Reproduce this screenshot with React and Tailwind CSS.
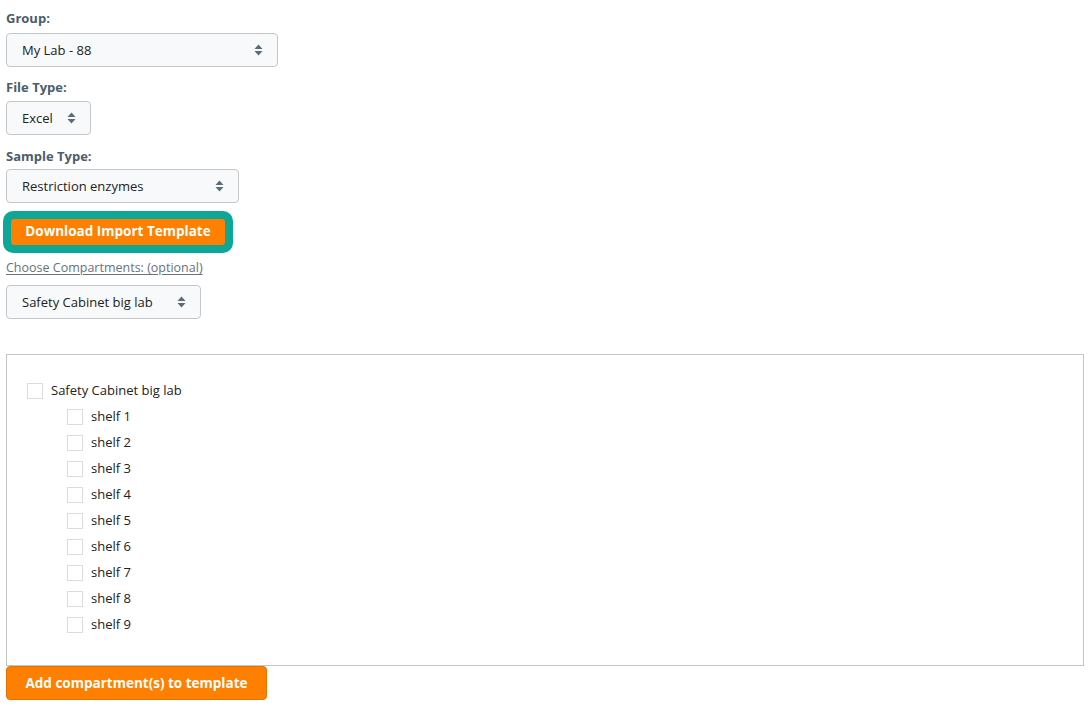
import React from "react";

const Arrows = () => (
  <svg width="9" height="12" viewBox="0 0 9 12" className="shrink-0">
    <path d="M4.5 0.5 L8.5 5 L0.5 5 Z" fill="#5a6b7b" />
    <path d="M4.5 11.5 L8.5 7 L0.5 7 Z" fill="#5a6b7b" />
  </svg>
);

const Select = ({ value, w }) => (
  <div
    className={`${w} h-[34px] flex items-center justify-between pl-[15px] pr-[14px] bg-[#f8f9fa] border border-[#c4c7ca] rounded-[4px] text-[13px] text-[#222]`}
  >
    <span className="pt-[2px]">{value}</span>
    <Arrows />
  </div>
);

const Label = ({ children, cls }) => (
  <div className={`text-[13px] font-bold text-[#4b5c6c] ${cls}`}>{children}</div>
);

const Box = () => (
  <span className="w-[16px] h-[16px] border border-[#dcdcdc] bg-white shrink-0 inline-block" />
);

export default function App() {
  const shelves = [1, 2, 3, 4, 5, 6, 7, 8, 9];
  return (
    <div
      className="w-[1091px] h-[713px] bg-white px-[6px] pt-[8px] text-[#222]"
      style={{ fontFamily: '"Open Sans", "Noto Sans", sans-serif' }}
    >
      <Label cls="leading-[20px] mb-[5px]">Group:</Label>
      <Select value="My Lab - 88" w="w-[272px]" />
      <Label cls="leading-[20px] mt-[10px] mb-[4px]">File Type:</Label>
      <Select value="Excel" w="w-[85px]" />
      <Label cls="leading-[20px] mt-[11px] mb-[3px]">Sample Type:</Label>
      <Select value="Restriction enzymes" w="w-[233px]" />
      <div className="mt-[8px] -ml-[3px] w-[230px] h-[42px] rounded-[10px] bg-[#0ca797] p-[8px]">
        <div className="h-[26px] rounded-[3px] bg-[#ff8000] flex items-center justify-center text-white font-bold text-[13.5px] pb-[1px]">
          Download Import Template
        </div>
      </div>
      <div className="mt-[6px] mb-[8px] text-[12.5px] leading-[18px] text-[#66727e] underline underline-offset-2">
        Choose Compartments: (optional)
      </div>
      <Select value="Safety Cabinet big lab" w="w-[195px]" />
      <div className="mt-[35px] w-[1078px] h-[312px] border border-[#c4c4c4] pl-[20px] pt-[28px]">
        <div className="flex items-center gap-[8px] h-[16px] text-[13px]">
          <Box />
          <span>Safety Cabinet big lab</span>
        </div>
        <div className="pl-[40px] pt-[10px] flex flex-col gap-[10px]">
          {shelves.map((n) => (
            <div key={n} className="flex items-center gap-[8px] h-[16px] text-[13px]">
              <Box />
              <span>shelf {n}</span>
            </div>
          ))}
        </div>
      </div>
      <div className="w-[261px] h-[34px] rounded-[4px] bg-[#ff8000] flex items-center justify-center text-white font-bold text-[13.5px] border border-[#e67300]">
        Add compartment(s) to template
      </div>
    </div>
  );
}
